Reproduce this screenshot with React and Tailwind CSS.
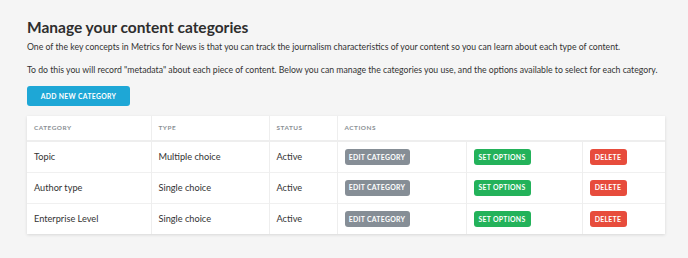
import React from 'react';

const rows = [
  { name: 'Topic', type: 'Multiple choice', status: 'Active' },
  { name: 'Author type', type: 'Single choice', status: 'Active' },
  { name: 'Enterprise Level', type: 'Single choice', status: 'Active' },
];

const btn = 'inline-flex items-center justify-center rounded-[3px] h-[16px] text-[6.9px] font-bold tracking-[0.04em] text-white uppercase';

export default function App() {
  return (
    <main className="min-h-[258px] bg-[#f5f5f5] px-[27px] pt-[17px] pb-6 text-[#333] font-['Lato',sans-serif]">
      <h1 className="text-[15.5px] font-bold leading-[20px] text-[#2e2e2e]">Manage your content categories</h1>
      <p className="mt-[3px] text-[8.7px] leading-[14px]">
        One of the key concepts in Metrics for News is that you can track the journalism characteristics of your content so you can learn about each type of content.
      </p>
      <p className="mt-[9px] text-[8.7px] leading-[14px]">
        To do this you will record "metadata" about each piece of content. Below you can manage the categories you use, and the options available to select for each category.
      </p>

      <button className="mt-[9px] block h-[20px] w-[103px] rounded-[3px] bg-[#1ea7d6] text-[6.8px] font-bold tracking-[0.05em] text-white">
        ADD NEW CATEGORY
      </button>

      <table className="mt-[10px] w-[638px] table-fixed border-collapse bg-white shadow-[0_1px_3px_rgba(0,0,0,0.12)]">
        <colgroup>
          <col className="w-[124px]" />
          <col className="w-[118px]" />
          <col className="w-[68px]" />
          <col className="w-[129px]" />
          <col className="w-[116px]" />
          <col className="w-[83px]" />
        </colgroup>
        <thead>
          <tr className="h-[25px] border-b-2 border-[#eeeeee] text-left text-[6.4px] tracking-[0.08em] text-[#8a8f94]">
            <th className="border-r border-[#eeeeee] pl-[7px] font-bold">CATEGORY</th>
            <th className="border-r border-[#eeeeee] pl-[7px] font-bold">TYPE</th>
            <th className="border-r border-[#eeeeee] pl-[7px] font-bold">STATUS</th>
            <th colSpan={3} className="pl-[7px] font-bold">ACTIONS</th>
          </tr>
        </thead>
        <tbody className="text-[9.2px] text-[#333]">
          {rows.map((r, i) => (
            <tr key={r.name} className={`h-[31px] ${i < rows.length - 1 ? 'border-b border-[#f0f0f0]' : ''}`}>
              <td className="border-r border-[#eeeeee] pl-[7px]">{r.name}</td>
              <td className="border-r border-[#eeeeee] pl-[7px]">{r.type}</td>
              <td className="border-r border-[#eeeeee] pl-[7px]">{r.status}</td>
              <td className="border-r border-[#eeeeee] pl-[7px]">
                <span className={`${btn} w-[65px] bg-[#868e96]`}>EDIT CATEGORY</span>
              </td>
              <td className="border-r border-[#eeeeee] pl-[7px]">
                <span className={`${btn} w-[57px] bg-[#23b25a]`}>SET OPTIONS</span>
              </td>
              <td className="pl-[7px]">
                <span className={`${btn} w-[37px] bg-[#e74c3c]`}>DELETE</span>
              </td>
            </tr>
          ))}
        </tbody>
      </table>
    </main>
  );
}
